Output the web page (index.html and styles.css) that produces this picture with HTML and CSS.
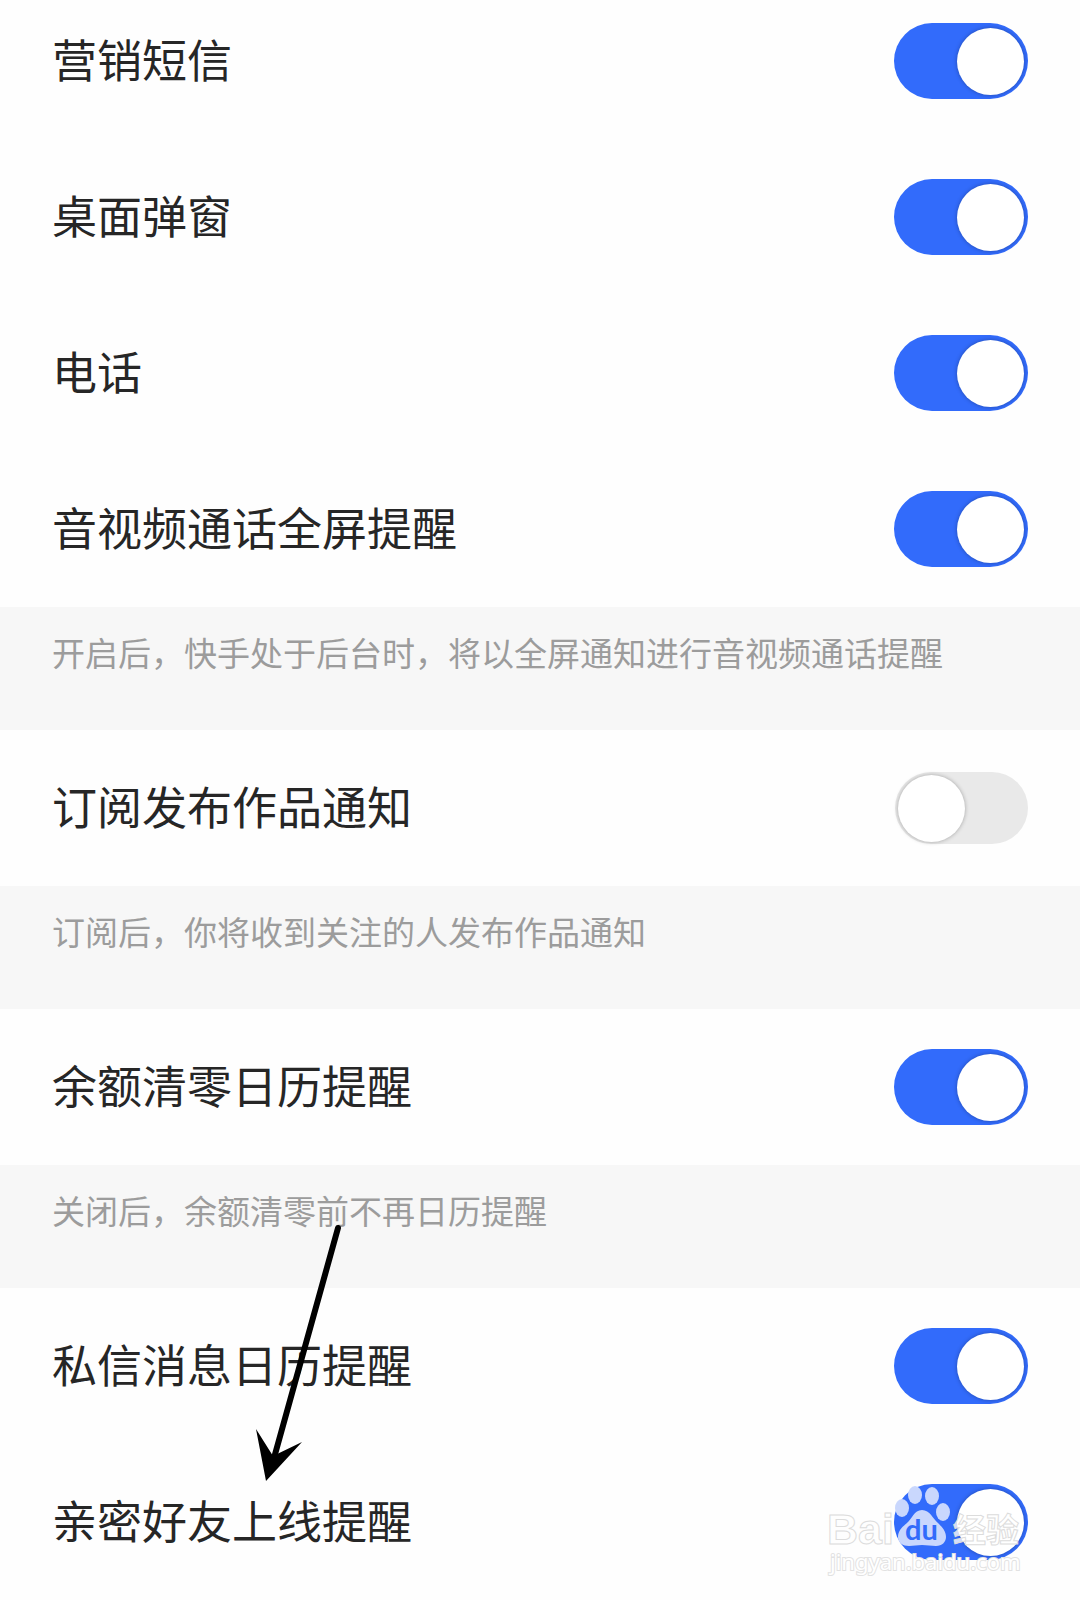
FILE: index.html
```html
<!DOCTYPE html>
<html lang="zh-CN">
<head>
    <meta charset="UTF-8">
    <meta name="viewport" content="width=device-width, initial-scale=1">
    <title>通知设置</title>
    <link rel="stylesheet" href="styles.css">
</head>
<body>
    <main class="settings">
        <div class="row">
            <label for="sms">营销短信</label>
            <input type="checkbox" class="switch" id="sms" checked>
        </div>
        <div class="row">
            <label for="popup">桌面弹窗</label>
            <input type="checkbox" class="switch" id="popup" checked>
        </div>
        <div class="row">
            <label for="phone">电话</label>
            <input type="checkbox" class="switch" id="phone" checked>
        </div>
        <div class="row">
            <label for="call">音视频通话全屏提醒</label>
            <input type="checkbox" class="switch" id="call" checked>
        </div>
        <p class="note">开启后，快手处于后台时，将以全屏通知进行音视频通话提醒</p>

        <div class="row">
            <label for="subscribe">订阅发布作品通知</label>
            <input type="checkbox" class="switch" id="subscribe">
        </div>
        <p class="note">订阅后，你将收到关注的人发布作品通知</p>

        <div class="row">
            <label for="balance">余额清零日历提醒</label>
            <input type="checkbox" class="switch" id="balance" checked>
        </div>
        <p class="note">关闭后，余额清零前不再日历提醒</p>

        <div class="row">
            <label for="message">私信消息日历提醒</label>
            <input type="checkbox" class="switch" id="message" checked>
        </div>
        <div class="row">
            <label for="friend">亲密好友上线提醒</label>
            <input type="checkbox" class="switch" id="friend" checked>
        </div>

        <svg class="arrow" width="100" height="260" viewBox="0 0 100 260" aria-hidden="true">
            <line x1="88" y1="4" x2="24" y2="234" />
            <path d="M6 205 L23 232 L52 218 L16 257 Z" />
        </svg>

        <svg class="watermark" width="280" height="140" viewBox="0 0 280 140">
            <g class="paw">
                <ellipse cx="102" cy="48" rx="7" ry="9" />
                <ellipse cx="115" cy="35" rx="7" ry="9" />
                <ellipse cx="132" cy="36" rx="7" ry="9" />
                <ellipse cx="143" cy="52" rx="7" ry="9" />
                <path d="M122 50 C114 50 112 59 107 63 C102 67 98 71 98 77 C98 83 103 86 109 86 C114 86 117 85 122 85 C127 85 131 86 136 86 C142 86 146 82 146 77 C146 71 142 67 138 63 C133 59 130 50 122 50 Z" />
            </g>
            <text class="du" x="105" y="80">du</text>
            <text class="brand" x="27" y="84">Bai</text>
            <text class="brand-cn" x="153" y="82">经验</text>
            <text class="site" x="30" y="110">jingyan.baidu.com</text>
        </svg>
    </main>
</body>
</html>
```
FILE: styles.css
```css
* {
    box-sizing: border-box;
}
body {
    margin: 0;
    background-color: #fefefe;
    color: #262626;
    font-family: "Noto Sans CJK SC", sans-serif;
    overflow-x: hidden;
}
/* list is scrolled a little, first row is cut at the top */
.settings {
    position: relative;
    margin-top: -17px;
}
.row {
    display: flex;
    align-items: center;
    justify-content: space-between;
    height: 156px;
    padding: 0 52px;
}
.row label {
    padding-bottom: 5px;
    font-size: 45px;
    line-height: 60px;
}
.note {
    margin: 0;
    height: 123px;
    padding: 21px 52px;
    background-color: #f7f7f7;
    color: #9c9c9c;
    font-size: 33px;
    line-height: 48px;
}
.switch {
    appearance: none;
    display: flex;
    align-items: center;
    flex-shrink: 0;
    width: 134px;
    height: 76px;
    margin: 0;
    padding: 0 4px;
    border-radius: 38px;
    background-color: #326bfb;
    cursor: pointer;
}
.switch::before {
    content: "";
    width: 67px;
    height: 67px;
    border-radius: 50%;
    background-color: #fff;
    box-shadow: 0 0 4px rgba(0, 0, 0, 0.3);
}
.switch:checked::before {
    margin-left: auto;
}
.switch:not(:checked) {
    width: 133px;
    height: 72px;
    padding: 0 3px;
    background-color: #e9e9e9;
}
.arrow {
    position: absolute;
    left: 250px;
    bottom: 116px;
    pointer-events: none;
}
.arrow line {
    stroke: #000;
    stroke-width: 6;
    stroke-linecap: round;
}
.watermark {
    position: absolute;
    right: 0;
    bottom: 0;
    pointer-events: none;
}
.paw {
    fill: #c9d7fd;
}
.watermark text {
    font-family: "Liberation Sans", "Noto Sans CJK SC", sans-serif;
}
.watermark .du {
    fill: #326bfb;
    font-family: Lato, sans-serif;
    font-size: 29px;
    font-weight: 700;
}
.watermark .brand,
.watermark .brand-cn {
    fill: #fff;
    fill-opacity: 0.8;
    stroke: #dcdcdc;
    stroke-width: 1;
    font-size: 43px;
    font-weight: 700;
}
.watermark .brand-cn {
    font-family: "Noto Sans CJK SC", sans-serif;
    font-size: 33px;
}
.watermark .site {
    fill: #fff;
    stroke: #e2e2e2;
    stroke-width: 2;
    paint-order: stroke;
    font-family: "Noto Sans", sans-serif;
    font-size: 22px;
}
```
